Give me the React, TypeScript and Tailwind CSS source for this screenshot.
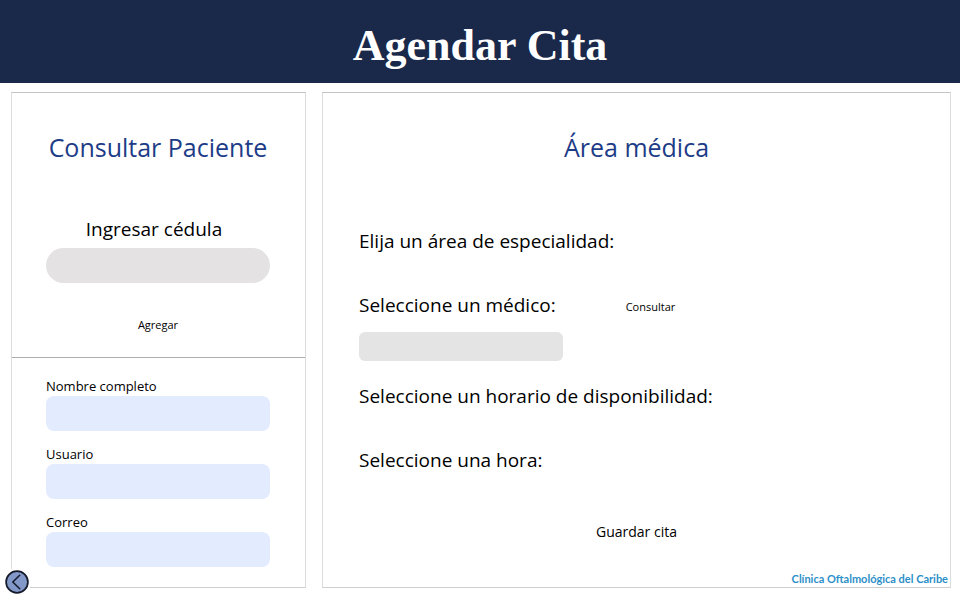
import React from "react";

const patientFields = [
  { id: "nombre", label: "Nombre completo", type: "text" },
  { id: "usuario", label: "Usuario", type: "text" },
  { id: "correo", label: "Correo", type: "email" },
];

function PatientPanel() {
  return (
    <section className="flex w-[295px] shrink-0 flex-col border border-t-[#c4c4c4] border-x-[#dcdcdc] border-b-[#cfcfcf]">
      <div className="flex flex-col items-center border-b border-[#adadad] pr-[35px] pl-[34px] pt-9 pb-[22px]">
        <h2 className="text-[25px] leading-9 whitespace-nowrap text-[#1d3c87]">Consultar Paciente</h2>
        <label htmlFor="cedula" className="mt-[50px] mr-2 text-[19px] leading-7">
          Ingresar cédula
        </label>
        <input
          id="cedula"
          type="text"
          className="mt-[5px] h-[35px] w-full rounded-full bg-[#e4e2e3] px-4 text-sm outline-none"
        />
        <button type="button" className="mt-8 text-[11px] leading-5">
          Agregar
        </button>
      </div>
      <div className="flex flex-col gap-[14px] pr-[35px] pl-[34px] pt-[19px] pb-5">
        {patientFields.map((field) => (
          <div key={field.id} className="flex flex-col gap-px">
            <label htmlFor={field.id} className="text-[13px] leading-[18px]">
              {field.label}
            </label>
            <input
              id={field.id}
              type={field.type}
              className="h-[35px] w-full rounded-lg bg-[#e3ebff] px-3 text-sm outline-none"
            />
          </div>
        ))}
      </div>
    </section>
  );
}

function MedicalPanel() {
  return (
    <section className="flex flex-1 flex-col border border-t-[#c4c4c4] border-x-[#dcdcdc] border-b-[#cfcfcf] pt-9">
      <h2 className="text-center text-[25px] leading-9 text-[#1d3c87]">Área médica</h2>
      <div className="flex flex-col items-start px-9 pt-[62px] text-[19px] leading-7">
        <p>Elija un área de especialidad:</p>
        <div className="mt-9 flex items-center gap-[70px]">
          <label htmlFor="medico">Seleccione un médico:</label>
          <button type="button" className="pt-1 text-[11px] leading-5">
            Consultar
          </button>
        </div>
        <input
          id="medico"
          type="text"
          className="mt-[13px] h-[29px] w-[204px] rounded-md bg-[#e4e4e4] px-3 text-sm outline-none"
        />
        <p className="mt-[21px]">Seleccione un horario de disponibilidad:</p>
        <p className="mt-9">Seleccione una hora:</p>
      </div>
      <button type="button" className="mt-12 self-center text-[14px] leading-5">
        Guardar cita
      </button>
      <p className="mt-auto pr-0.5 text-right font-['Liberation_Sans_Narrow','Lato',sans-serif] text-[11px] leading-4 font-bold text-[#2c8fc9]">
        Clínica Oftalmológica del Caribe
      </p>
    </section>
  );
}

export default function App() {
  return (
    <div className="relative flex min-h-screen flex-col bg-white font-['Open_Sans',sans-serif] text-black">
      <header className="flex h-[83px] items-center justify-center bg-[#1a2849] pt-2">
        <h1 className="font-['Liberation_Serif',serif] text-[44px] leading-[52px] font-bold text-white">
          Agendar Cita
        </h1>
      </header>
      <main className="flex flex-1 gap-4 pt-[9px] pr-[9px] pb-3 pl-[11px]">
        <PatientPanel />
        <MedicalPanel />
      </main>
      <button
        type="button"
        aria-label="Volver"
        className="absolute bottom-1 left-[3px] flex size-7 items-center justify-center rounded-full bg-white"
      >
        <svg viewBox="0 0 24 24" className="size-6" fill="none" stroke="#151a2b">
          <circle cx="12" cy="12" r="10.9" fill="#8298c8" strokeWidth="1.7" />
          <path d="M14.7 5.3 7.8 12l6.9 6.7" strokeWidth="1.6" strokeLinecap="round" strokeLinejoin="round" />
        </svg>
      </button>
    </div>
  );
}
